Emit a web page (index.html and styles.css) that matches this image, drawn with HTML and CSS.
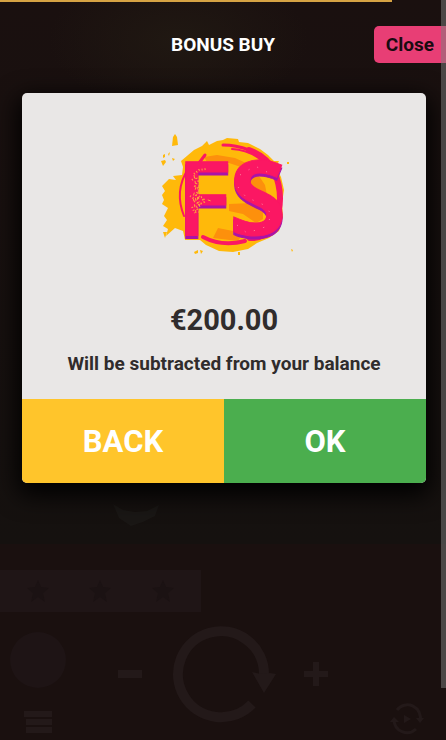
FILE: index.html
```html
<!DOCTYPE html>
<html lang="en">
<head>
    <meta charset="UTF-8">
    <meta name="viewport" content="width=device-width, initial-scale=1.0">
    <title>Bonus Buy</title>
    <link rel="stylesheet" href="styles.css">
</head>
<body>
    <!-- Game screen, dimmed behind the dialog -->
    <div class="game">
        <div class="reels">
            <svg class="reel-symbol" viewBox="0 0 60 30" aria-hidden="true">
                <path d="M8 2 L18 8 L30 10 L42 9 L54 3 L50 14 L38 20 L26 24 L14 16 Z"/>
            </svg>
        </div>
        <div class="features">
            <svg viewBox="0 0 24 24" aria-hidden="true"><path d="M12 1l3 7 8 1-6 5 2 9-7-5-7 5 2-9-6-5 8-1z"/></svg>
            <svg viewBox="0 0 24 24" aria-hidden="true"><path d="M12 1l3 7 8 1-6 5 2 9-7-5-7 5 2-9-6-5 8-1z"/></svg>
            <svg viewBox="0 0 24 24" aria-hidden="true"><path d="M12 1l3 7 8 1-6 5 2 9-7-5-7 5 2-9-6-5 8-1z"/></svg>
        </div>
        <div class="controls">
            <div class="side">
                <button class="icon-btn coin" aria-label="Feature"></button>
                <button class="icon-btn menu" aria-label="Menu">
                    <svg viewBox="0 0 28 24"><path d="M0 1h28v6H0zM2 9h26v6H2zM2 17h26v6H2z"/></svg>
                </button>
            </div>
            <div class="bet">
                <button class="icon-btn step" aria-label="Decrease bet">
                    <svg viewBox="0 0 24 24"><path d="M0 8h24v8H0z"/></svg>
                </button>
                <button class="icon-btn spin" aria-label="Spin">
                    <svg viewBox="0 0 106 98">
                        <path class="ring" d="M82 79 A43 43 0 1 1 94 49"/>
                        <path d="M82 47 L91 49 L100 48 L106 49 L94 68 Z"/>
                    </svg>
                </button>
                <button class="icon-btn step" aria-label="Increase bet">
                    <svg viewBox="0 0 24 24"><path d="M9 0h6v9h9v6h-9v9H9v-9H0V9h9z"/></svg>
                </button>
            </div>
            <div class="side right">
                <button class="icon-btn auto" aria-label="Autoplay">
                    <svg viewBox="0 0 34 30">
                        <path class="thin" d="M7 6 A13 13 0 0 1 30 17 M26 25 A13 13 0 0 1 4 16"/>
                        <path d="M0 18l4-5 5 5zM26 14l4 5 4-5zM14 11l7 4-7 4z"/>
                    </svg>
                </button>
            </div>
        </div>
    </div>

    <div class="overlay">
        <div class="progress"></div>
        <header class="top-bar">
            <h1 id="title">BONUS BUY</h1>
            <button class="close">Close</button>
        </header>
        <main class="dialog" role="dialog" aria-labelledby="title">
            <div class="info">
                <svg class="logo" viewBox="0 0 145 135" role="img" aria-label="FS">
                    <!-- yellow paint -->
                    <g fill="#ffb90a">
                        <path d="M29 36 L42 25 L50 21 L55 16 L57 20 L65 16 L71 15 L75 13 L86 14 L87 17 L96 18 L108 24 L116 30 L122 36 L127 36 L124 42 L129 52 L132 65 L130 78 L131 92 L127 106 L117 113 L105 118 L96 124 L81 127 L67 126 L54 120 L48 115 L33 115 L31 106 L23 103 L14 111 L16 104 L11 101 L15 95 L12 91 L16 83 L10 79 L12 75 L10 70 L13 66 L10 61 L17 54 L24 55 L21 51 L30 50 L31 42 Z"/>
                        <path d="M21 12 L23 9 L25 12 L26 20 L20 21 Z"/>
                        <path d="M11 30l2-1v3l-2 1zM9 36l4-1 1 2-3 4zM16 29l2-2-1 4zM20 33l3 1-2 2zM42 127l4-2v3l-3 1zM48 125l3 1-2 3zM135 37l2 0v2h-2zM86 127l2 0v3h-2zM139 124l2 1-1 2zM11 107l4 0-2 6z"/>
                    </g>
                    <!-- darker brush marks -->
                    <g fill="#fd900c">
                        <path d="M52 32 L65 30 L83 33 L94 38 L89 42 L77 38 L55 37 Z"/>
                        <path d="M66 103 L81 106 L90 110 L86 116 L61 113 Z"/>
                        <path d="M96 54 L107 51 L113 60 L115 70 L111 75 L101 68 Z"/>
                        <path d="M77 79 L100 78 L111 86 L111 94 L104 98 L91 89 L77 86 Z"/>
                    </g>
                    <g fill="none" stroke="#fb1763" stroke-linecap="round">
                        <path stroke-width="3" d="M71 20 Q84 20 97 25"/>
                        <path stroke-width="6" d="M97 25 Q115 32 122 46 Q134 73 122 101 Q112 114 98 113"/>
                        <path stroke-width="2" d="M80 24 Q96 25 108 34"/>
                        <path stroke-width="4" d="M51 112 Q70 122 93 116"/>
                        <path stroke-width="3" d="M53 30 L47 38"/>
                        <path stroke-width="2" d="M36 44 Q22 66 32 91"/>
                    </g>
                    <text class="logo-text" y="110"><tspan class="thin-letter" x="24">F</tspan><tspan x="77">S</tspan></text>
                    <!-- spatter -->
                    <g fill="none" stroke="#ffa33c" stroke-width="2">
                        <path stroke-dasharray="1 2" d="M42 49l5-4 7-1M40 55l4-3 2 4-3 5 4 3-3 6 4 2-6 4 7 4-5 3 4 5M38 71l5 3 7-2 2 5-8 4M40 82l3 6"/>
                        <path stroke-dasharray="3 3" stroke-width="1" d="M42 50l2 12-3 10 3 16M47 60l-2 18 8-4 6 2"/>
                    </g>
                    <path fill="none" stroke="#ff8aa0" stroke-width="1" stroke-dasharray="1 9" d="M88 50l15-9 16 8M86 62l8 10 18 8 8 10-7 12-18 6-10-8"/>
                </svg>
                <p class="price">€200.00</p>
                <p class="note">Will be subtracted from your balance</p>
            </div>
            <div class="actions">
                <button class="back">BACK</button>
                <button class="ok">OK</button>
            </div>
        </main>
        <div class="scrollbar"></div>
    </div>
</body>
</html>
```
FILE: styles.css
```css
* {
    box-sizing: border-box;
}

body {
    font-family: Roboto, sans-serif;
    font-weight: bold;
    margin: 0;
    background-color: #1a100f;
    color: #302c2c;
}

h1, p {
    margin: 0;
}

button {
    font: inherit;
    border: none;
    padding: 0;
    cursor: pointer;
}

svg {
    overflow: visible;
}

/* Game screen */
.game {
    min-height: 100vh;
    display: flex;
    flex-direction: column;
    overflow: hidden;
}

.game svg {
    display: block;
    width: 100%;
    fill: #231919;
}

.reels {
    flex: 1;
    display: flex;
    align-items: flex-end;
    max-height: 544px;
    padding: 0 0 12px 105px;
    background: radial-gradient(ellipse 130px 70px at 40% 40px, #201812, transparent), linear-gradient(#1a100f, #15110f);
}

.reels .reel-symbol {
    width: 60px;
    fill: #1a1715;
}

.features {
    display: flex;
    justify-content: space-between;
    align-items: center;
    width: 45%;
    height: 42px;
    margin-top: 26px;
    padding: 0 26px;
    background-color: #1f1516;
}

.features svg {
    width: 24px;
    fill: #1b1213;
}

.controls {
    display: grid;
    grid-template-columns: 1fr auto 1fr;
    align-items: center;
    height: 128px;
    padding: 0 22px 4px 10px;
}

.bet {
    display: flex;
    align-items: center;
    gap: 28px;
    margin-left: 12px;
}

.icon-btn {
    background: none;
}

.side {
    display: flex;
    flex-direction: column;
    align-items: flex-start;
    justify-content: flex-end;
    gap: 22px;
    height: 120px;
}

.side.right {
    align-items: flex-end;
}

.coin {
    width: 56px;
    height: 56px;
    border-radius: 50%;
    background-color: #1e1415;
}

.menu {
    width: 28px;
    margin-left: 14px;
}

.step {
    width: 24px;
}

.spin {
    width: 106px;
}

.auto {
    width: 34px;
}

.game .ring, .game .thin {
    fill: none;
    stroke: #231919;
    stroke-width: 10;
}

.game .thin {
    stroke-width: 3;
}

/* Bonus buy */
.overlay {
    position: absolute;
    inset: 0;
}

.progress {
    width: 88%;
    height: 2px;
    margin-bottom: 24px;
    background-color: #d6a344;
}

.top-bar {
    display: grid;
    grid-template-columns: 1fr auto 1fr;
    align-items: center;
}

.top-bar h1 {
    grid-column: 2;
    font-size: 19px;
    line-height: 24px;
    color: #fff;
}

.close {
    justify-self: end;
    height: 37px;
    padding: 0 12px;
    font-size: 19px;
    color: #190b10;
    background-color: #e83e75;
    border-radius: 5px 0 0 5px;
}

.dialog {
    margin: 30px 20px 0 22px;
    border-radius: 5px;
    overflow: hidden;
    background-color: #e9e7e6;
    box-shadow: 0 8px 24px 4px #000;
}

.info {
    display: flex;
    flex-direction: column;
    align-items: center;
    padding: 32px 16px 23px;
    text-align: center;
}

.logo {
    width: 145px;
    height: 135px;
    margin-bottom: 42px;
}

.logo-text {
    font-family: "Open Sans", sans-serif;
    font-size: 104px;
    fill: #fb1763;
    stroke: #fb1763;
    stroke-width: 1;
    filter: drop-shadow(0 3px 0 #a913a8);
}

.logo-text .thin-letter {
    font-weight: 600;
}

.price {
    margin-bottom: 14px;
    font-size: 29px;
    line-height: 36px;
}

.note {
    font-size: 19px;
    line-height: 24px;
}

.actions {
    display: grid;
    grid-template-columns: 1fr 1fr;
}

.actions button {
    height: 84px;
    font-size: 31px;
    color: #fff;
}

.actions .back {
    background-color: #ffc52b;
}

.actions .ok {
    background-color: #4bae4e;
}

.scrollbar {
    position: absolute;
    top: 0;
    right: 0;
    width: 5px;
    height: 93%;
    background-color: rgba(125, 125, 125, 0.5);
}
```
